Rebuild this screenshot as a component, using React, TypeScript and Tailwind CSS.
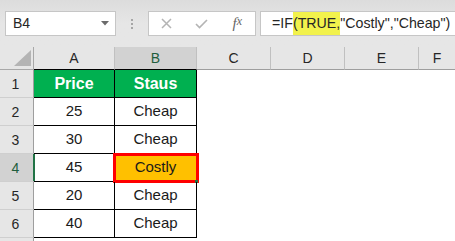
const cols = ['A', 'B', 'C', 'D', 'E', 'F'];

const rows: [string, string][] = [
    ['Price', 'Staus'],
    ['25', 'Cheap'],
    ['30', 'Cheap'],
    ['45', 'Costly'],
    ['20', 'Cheap'],
    ['40', 'Cheap'],
    ['', ''],
];

function FormulaBar() {
    return (
        <div className="h-[47px] bg-gradient-to-b from-[#dcdcdc] via-[#e6e6e6] to-[#e6e6e6] pt-[11px]">
            <div className="flex h-[25px] items-stretch">
                {/* name box */}
                <div className="ml-[5px] flex w-[111px] items-center justify-between border border-[#c6c6c6] bg-white pl-[7px] pr-[6px]">
                    <span className="text-[14px] text-[#262626]">B4</span>
                    <svg width="8" height="5" viewBox="0 0 8 5">
                        <polygon points="0,0 8,0 4,4.5" fill="#6b6b6b" />
                    </svg>
                </div>
                <div className="flex w-[32px] flex-col items-center justify-center gap-[2px]">
                    <span className="h-[2px] w-[2px] bg-[#a6a6a6]" />
                    <span className="h-[2px] w-[2px] bg-[#a6a6a6]" />
                    <span className="h-[2px] w-[2px] bg-[#a6a6a6]" />
                </div>
                {/* cancel / enter / fx */}
                <div className="flex w-[108px] items-center border border-[#c6c6c6] bg-white">
                    <div className="flex w-[36px] justify-center">
                        <svg width="11" height="11" viewBox="0 0 11 11">
                            <path d="M1 1 L10 10 M10 1 L1 10" stroke="#b4b4b4" strokeWidth="1.5" />
                        </svg>
                    </div>
                    <div className="flex w-[36px] justify-center">
                        <svg width="13" height="10" viewBox="0 0 13 10">
                            <path d="M1 5 L4.5 8.5 L12 1" stroke="#b4b4b4" strokeWidth="1.6" fill="none" />
                        </svg>
                    </div>
                    <div className="flex w-[36px] justify-center font-['Liberation_Serif',serif] text-[15px] italic text-[#666]">
                        f<span className="text-[12px]">x</span>
                    </div>
                </div>
                {/* formula input */}
                <div className="ml-[4px] flex flex-1 items-stretch border-y border-l border-[#c6c6c6] bg-white pl-[11px] text-[14.2px] text-[#262626]">
                    <span className="flex items-center">=IF</span>
                    <span className="flex items-center bg-[#f2f24c]">(TRUE,</span>
                    <span className="flex items-center">"Costly","Cheap")</span>
                </div>
            </div>
        </div>
    );
}

export default function App() {
    return (
        <div className="h-[241px] w-[455px] overflow-hidden bg-white font-['Liberation_Sans',Arial,sans-serif]">
            <FormulaBar />
            <div className="grid grid-cols-[34px_81px_82px_74px_74px_74px_1fr]">
                {/* column headers */}
                <div className="relative h-[23px] border-b border-r border-[#a8a8a8] bg-[#e6e6e6]">
                    <svg className="absolute bottom-[3px] right-[2px]" width="17" height="16" viewBox="0 0 17 16">
                        <polygon points="17,0 17,16 0,16" fill="#b4b4b4" />
                    </svg>
                </div>
                {cols.map(c => (
                    <div
                        key={c}
                        className={`flex h-[23px] items-center justify-center border-b text-[14px] ${
                            c === 'A' || c === 'B' ? 'border-b-black' : 'border-b-[#9e9e9e]'
                        } ${c === 'B' ? 'bg-[#d2d2d2] text-[#1f5e3d]' : 'bg-[#e6e6e6] text-[#262626]'} ${
                            c === 'F' ? '' : 'border-r border-r-[#c0c0c0]'
                        }`}
                    >
                        {c}
                    </div>
                ))}

                {rows.map(([a, b], i) => {
                    const row = i + 1;
                    const inTable = row <= 6;
                    const selected = row === 4;
                    const header = row === 1;
                    return [
                        <div
                            key={`h${row}`}
                            className={`flex h-[28px] items-end justify-center border-b border-r border-b-[#cfcfcf] border-r-[#9e9e9e] pb-[2px] pr-[2px] text-[14px] ${
                                selected ? 'bg-[#d2d2d2] text-[#1f5e3d]' : 'bg-[#e6e6e6] text-[#262626]'
                            }`}
                        >
                            {inTable ? row : ''}
                        </div>,
                        <div
                            key={`a${row}`}
                            className={`relative flex h-[28px] items-center justify-center text-[15px] ${
                                inTable ? 'border-b border-r border-black' : ''
                            } ${header ? 'bg-[#00b050] text-[16px] font-bold text-white' : 'text-[#1a1a1a]'}`}
                        >
                            {selected && <span className="absolute -left-[1px] top-0 h-full w-[2px] bg-[#217346]" />}
                            {a}
                        </div>,
                        <div
                            key={`b${row}`}
                            className={`relative flex h-[28px] items-center justify-center text-[15px] ${
                                inTable ? 'border-b border-r border-black' : ''
                            } ${header ? 'bg-[#00b050] text-[16px] font-bold text-white' : 'text-[#1a1a1a]'} ${
                                selected ? 'bg-[#ffc000]' : ''
                            }`}
                        >
                            {b}
                            {selected && (
                                <>
                                    <span className="absolute -left-[2px] -top-[1px] h-[30px] w-[86px] border-[3px] border-[#ff0000]" />
                                    <span className="absolute -bottom-[2px] -right-[2px] h-[3px] w-[3px] bg-[#217346]" />
                                </>
                            )}
                        </div>,
                        ...cols.slice(2).map(c => <div key={`${c}${row}`} className="h-[28px] bg-white" />),
                    ];
                })}
            </div>
        </div>
    );
}
